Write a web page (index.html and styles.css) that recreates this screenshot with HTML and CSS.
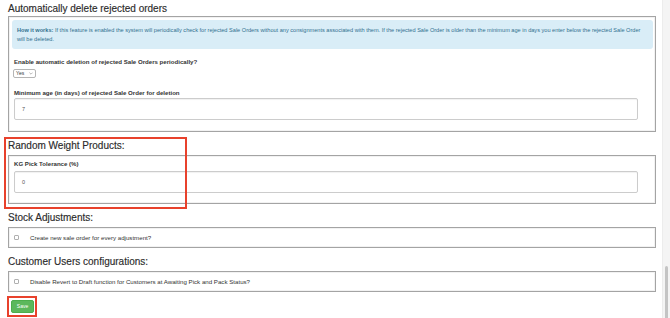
FILE: index.html
```html
<!DOCTYPE html>
<html lang="en">
<head>
<meta charset="utf-8">
<title>Settings</title>
<link rel="stylesheet" href="styles.css">
</head>
<body>
<div class="page">
  <h2 class="title">Automatically delete rejected orders</h2>
  <div class="panel panel-main">
    <div class="info"><strong>How it works:</strong> If this feature is enabled the system will periodically check for rejected Sale Orders without any consignments associated with them. If the rejected Sale Order is older than the minimum age in days you enter below the rejected Sale Order will be deleted.</div>
    <div class="group group-first">
      <label class="label">Enable automatic deletion of rejected Sale Orders periodically?</label>
      <div class="select"><span>Yes</span><svg class="chev" width="4" height="3" viewBox="0 0 4 3"><path d="M0.4 0.6 L2 2.2 L3.6 0.6" fill="none" stroke="#888" stroke-width="0.6"/></svg></div>
    </div>
    <div class="group group-second">
      <label class="label">Minimum age (in days) of rejected Sale Order for deletion</label>
      <div class="input">7</div>
    </div>
  </div>

  <div class="section marked">
    <h2 class="heading">Random Weight Products:</h2>
    <div class="panel panel-form">
      <div class="group">
        <label class="label">KG Pick Tolerance (%)</label>
        <div class="input input-tight">0</div>
      </div>
    </div>
    <div class="redbox redbox-rw"></div>
  </div>

  <h2 class="heading">Stock Adjustments:</h2>
  <div class="panel panel-check">
    <span class="checkbox"></span><span class="check-text">Create new sale order for every adjustment?</span>
  </div>

  <h2 class="heading">Customer Users configurations:</h2>
  <div class="panel panel-check">
    <span class="checkbox"></span><span class="check-text">Disable Revert to Draft function for Customers at Awaiting Pick and Pack Status?</span>
  </div>

  <div class="save-wrap">
    <button class="save">Save</button>
    <div class="redbox redbox-save"></div>
  </div>
</div>
<div class="scrollbar"><div class="thumb"></div></div>
</body>
</html>
```

FILE: styles.css
```css
html, body {
  margin: 0;
  padding: 0;
  background: #ffffff;
}
body {
  font-family: "Liberation Sans", Arial, Helvetica, sans-serif;
  color: #333333;
  overflow: hidden;
  width: 670px;
  height: 318px;
}
.page {
  padding: 2px 14px 0 8px;
}
.title,
.heading {
  margin: 0;
  font-size: 10px;
  line-height: 14px;
  font-weight: normal;
  color: #2b2b2b;
  -webkit-text-stroke: 0.15px #2b2b2b;
}
.heading {
  margin: 7px 0 2px;
}
.panel {
  border: 1px solid #a4a4a4;
  box-shadow: inset 0 0 0 1px #f2f2f2;
}
.panel-main {
  padding: 3px 2px 11px 3px;
}
.info {
  background: #d9edf7;
  color: #31708f;
  border-radius: 3px;
  font-size: 5.6px;
  line-height: 8.5px;
  padding: 6px 5px 5px 5px;
  height: 29px;
  box-sizing: border-box;
}
.info strong {
  font-weight: bold;
}
.group {
  padding: 0 15px 0 2px;
  font-size: 6px;
}
.group-first {
  margin-top: 8px;
}
.group-second {
  margin-top: 10px;
}
.label {
  display: block;
  font-size: 6.1px;
  line-height: 9px;
  font-weight: bold;
  color: #333333;
}
.select {
  display: flex;
  align-items: center;
  margin-top: 3px;
  margin-left: -1px;
  height: 9px;
  width: 23px;
  box-sizing: border-box;
  padding: 0 2px;
  border: 1px solid #b5b5b5;
  border-radius: 2px;
  background: #ffffff;
  font-size: 5px;
  line-height: 7px;
  color: #333333;
}
.chev {
  display: block;
  margin-left: auto;
}
.input {
  margin-top: 1px;
  height: 22px;
  box-sizing: border-box;
  border: 1px solid #cccccc;
  border-radius: 2px;
  box-shadow: inset 0 1px 1px rgba(0, 0, 0, 0.06);
  padding-left: 7px;
  font-size: 5.5px;
  line-height: 20px;
  color: #555555;
}
.input-tight {
  margin-top: 3px;
}
.panel-form {
  padding: 3px 2px 10px 3px;
}
.section {
  position: relative;
}
.panel-check {
  display: flex;
  align-items: center;
  height: 19px;
  padding-left: 5px;
}
.checkbox {
  width: 5px;
  height: 5px;
  box-sizing: border-box;
  border: 1px solid #b0b0b0;
  border-radius: 1px;
  background: #ffffff;
  flex: none;
}
.check-text {
  margin-left: 11px;
  font-size: 6.15px;
  color: #333333;
}
.save-wrap {
  position: relative;
  margin: 8px 0 0 3px;
  width: 23px;
}
.save {
  display: block;
  width: 23px;
  height: 13px;
  padding: 0;
  border: 1px solid #4cae4c;
  border-radius: 2px;
  background: #5cb85c;
  color: #ffffff;
  font-family: "Liberation Sans", Arial, sans-serif;
  font-size: 5px;
  line-height: 11px;
}
.redbox {
  position: absolute;
  border: 2px solid #e8412c;
  box-sizing: border-box;
  pointer-events: none;
}
.redbox-rw {
  left: -4px;
  top: -2px;
  width: 183px;
  height: 72px;
}
.redbox-save {
  left: -4px;
  top: -4px;
  width: 30px;
  height: 21px;
}
.scrollbar {
  position: fixed;
  top: 0;
  right: 0;
  width: 7px;
  height: 318px;
  background: #f4f4f4;
  border-left: 1px solid #ececec;
}
.thumb {
  position: absolute;
  left: 2px;
  top: 266px;
  width: 3px;
  height: 60px;
  border-radius: 2px;
  background: #c4c4c4;
}
```
